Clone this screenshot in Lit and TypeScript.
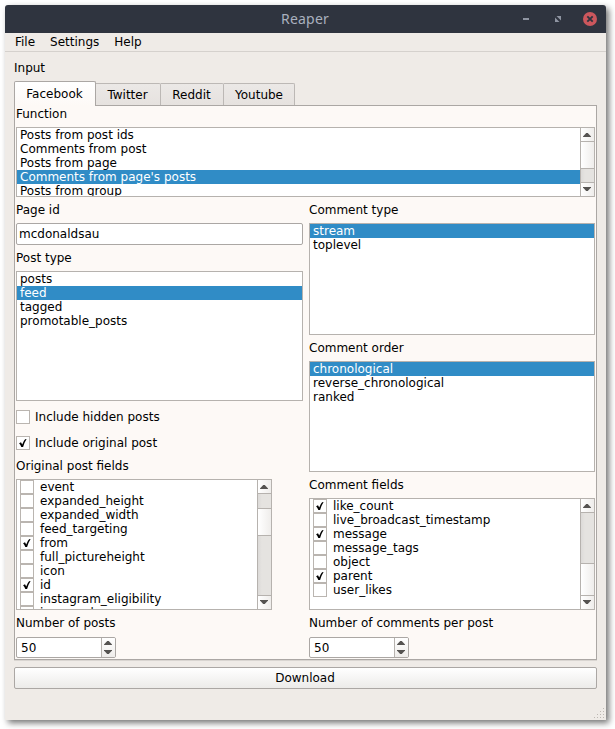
import { LitElement, html, css, svg, nothing } from "lit";
import { customElement, property } from "lit/decorators.js";
import { classMap } from "lit/directives/class-map.js";
import { styleMap } from "lit/directives/style-map.js";

interface Item {
  text: string;
  checked?: boolean;
}

const arrow = (down = false) => html`
  <svg class=${down ? "arrow down" : "arrow"} width="8" height="4" viewBox="0 0 8 4">
    <path d="M3.2 0H4.8L8 3.4V4H0V3.4Z" fill="#555351" />
  </svg>`;

const box = (checked = false) => html`
  <svg class="box" width="14" height="14" viewBox="0 0 14 14">
    <rect x=".5" y=".5" width="13" height="13" fill="#fff" stroke="#bab5b0" />
    ${checked
      ? svg`<path d="M3.1 7.2L5 6.2L6.2 8.4Q7.4 5 9.1 3.2L10.6 3Q8.3 6.6 7.1 11H5.3Q4.6 8.8 3.1 7.2Z" fill="#000" />`
      : nothing}
  </svg>`;

@customElement("list-box")
export class ListBox extends LitElement {
  @property({ attribute: false }) items: Item[] = [];
  @property() selected = "";
  @property({ type: Boolean }) checks = false;
  @property({ attribute: false }) thumb?: [number, number];

  static styles = css`
    :host { display: flex; box-sizing: border-box; border: 1px solid #b6b2ae; background: #fff; overflow: hidden; }
    .rows { flex: 1; min-width: 0; overflow: hidden; }
    .row { display: flex; height: 14px; line-height: 14px; padding-left: 3px; white-space: pre; }
    .row.on { background: #308cc6; color: #fff; }
    .box { flex: none; margin-right: 6px; }
    .bar { width: 14px; box-sizing: border-box; border-left: 1px solid #b6b2ae; display: flex; flex-direction: column; background: linear-gradient(90deg, #dcdad8, #e5e3e0 30%); }
    .btn { flex: none; box-sizing: border-box; height: 14px; padding: 5px 0 0 2px; background: linear-gradient(90deg, #fff, #efedeb); }
    .btn.top { border-bottom: 1px solid #b6b2ae; }
    .btn.bottom { border-top: 1px solid #b6b2ae; margin-top: auto; padding-top: 4px; }
    .thumb { flex: none; box-sizing: border-box; border-bottom: 1px solid #b6b2ae; background: linear-gradient(90deg, #fff, #efedeb); }
    .thumb.mid { border-top: 1px solid #b6b2ae; }
    .thumb.end { border-bottom: 0; }
    .arrow { display: block; }
    .down { transform: rotate(180deg); }
  `;

  render() {
    const t = this.thumb;
    return html`
      <div class="rows">
        ${this.items.map((i) => html`
          <div class=${classMap({ row: true, on: i.text === this.selected })}>
            ${this.checks ? box(i.checked) : nothing}<span>${i.text}</span>
          </div>`)}
      </div>
      ${t
        ? html`<div class="bar">
            <div class="btn top">${arrow()}</div>
            <div class=${classMap({ thumb: true, mid: t[0] > 0, end: t[0] > 40 })}
              style=${styleMap({ marginTop: t[0] + "px", height: t[1] + "px" })}></div>
            <div class="btn bottom">${arrow(true)}</div>
          </div>`
        : nothing}`;
  }
}

@customElement("spin-box")
export class SpinBox extends LitElement {
  @property({ type: Number }) value = 0;

  static styles = css`
    :host { display: flex; box-sizing: border-box; width: 100px; height: 21px; border: 1px solid #aba7a4; border-radius: 2px; background: #fff; overflow: hidden; }
    .value { flex: 1; padding-left: 4px; line-height: 20px; }
    .steps { width: 14px; box-sizing: border-box; border-left: 1px solid #b6b2ae; display: flex; flex-direction: column; gap: 5px; padding: 3px 0 0 2px; background: linear-gradient(#fff, #efedeb); }
    .arrow { display: block; flex: none; }
    .down { transform: rotate(180deg); }
  `;

  render() {
    return html`<div class="value">${this.value}</div>
      <div class="steps">${arrow()}${arrow(true)}</div>`;
  }
}

const list = (...names: string[]): Item[] =>
  names.map((n) => ({ text: n.replace("*", ""), checked: n.endsWith("*") }));

@customElement("app-root")
export class AppRoot extends LitElement {
  static styles = css`
    :host { display: block; box-sizing: border-box; height: 729px; padding: 5px 9px 9px 5px; background: #fff; overflow: hidden; font: 12px "DejaVu Sans", sans-serif; color: #000; }
    .window { height: 715px; box-sizing: border-box; background: #efebe7; border-radius: 3px 3px 0 0; box-shadow: 3px 3px 6px 0 rgba(0, 0, 0, .55); display: flex; flex-direction: column; position: relative; }
    .title { height: 28px; flex: none; display: grid; grid-template-columns: 1fr auto 1fr; align-items: center; background: #2f343f; border-radius: 3px 3px 0 0; color: #a9b0be; font: 14px/28px "Noto Sans", sans-serif; letter-spacing: .2px; }
    .name { grid-column: 2; padding-right: 1px; }
    .controls { display: flex; justify-content: flex-end; align-items: center; padding-right: 9px; }
    .controls svg { display: block; }
    .menu { height: 18px; flex: none; display: flex; gap: 15px; padding-left: 10px; border-bottom: 1px solid #d5d1cd; line-height: 18px; }
    .body { padding: 0 9px; }
    .heading { height: 29px; line-height: 33px; }
    .tabs { display: flex; align-items: flex-end; height: 24px; }
    .tab { box-sizing: border-box; height: 22px; border: 1px solid #bcb8b5; border-left: 0; border-bottom: 0; border-radius: 0 2px 0 0; background: linear-gradient(#ebe8e6, #e6e2df); text-align: center; line-height: 22px; padding-right: 1px; }
    .tab.active { height: 25px; width: 82px; border: 1px solid #aba7a4; border-bottom: 0; border-radius: 2px 2px 0 0; background: linear-gradient(#fff, #fdf9f6); margin-bottom: -1px; line-height: 24px; position: relative; z-index: 1; }
    .twitter { width: 65px; }
    .reddit { width: 63px; }
    .youtube { width: 71px; padding-right: 0; }
    .pane { box-sizing: border-box; height: 555px; border: 1px solid #aba7a4; background: #fdf9f6; padding: 0 1px; box-shadow: 0 1px 0 #d9d5d1; }
    .label { height: 26px; line-height: 26px; white-space: nowrap; }
    .label.first { height: 21px; line-height: 16px; }
    .label.fields { height: 29px; line-height: 32px; }
    .label.count { height: 27px; line-height: 26px; }
    .columns { display: grid; grid-template-columns: 287px 286px; gap: 6px; }
    .functions { height: 70px; }
    .types { height: 130px; }
    .post-fields { height: 131px; width: 256px; }
    .tall { height: 112px; }
    .order { height: 111px; }
    .entry { box-sizing: border-box; height: 22px; border: 1px solid #aba7a4; border-radius: 2px; background: #fff; padding-left: 2px; line-height: 20px; }
    .check { display: flex; height: 14px; line-height: 14px; margin-top: 12px; gap: 5px; }
    .check.hidden-posts { margin-top: 9px; }
    .box { flex: none; }
    .download { box-sizing: border-box; height: 22px; margin-top: 7px; border: 1px solid #aba7a4; border-radius: 2px; background: linear-gradient(#fff, #ecebe9); text-align: center; line-height: 20px; padding-right: 1px; }
    .grip { position: absolute; right: 2px; bottom: 2px; }
  `;

  render() {
    const dots = [0, 1, 2, 3].flatMap((r) =>
      Array.from({ length: r + 1 }, (_, c) => [9 - c * 3, r * 3]));
    return html`
      <div class="window">
        <div class="title">
          <span class="name">Reaper</span>
          <div class="controls">
            <svg width="74" height="14" viewBox="0 0 74 14">
              <rect y="6" width="6" height="2" fill="#8f95a2" />
              <path d="M33.5 4H38V8.5ZM32 5.5V10H36.5Z" fill="#8f95a2" />
              <circle cx="67" cy="7" r="7" fill="#cc575d" />
              <path d="M64.3 4.3L69.7 9.7M69.7 4.3L64.3 9.7" stroke="#2f343f" stroke-width="1.9" />
            </svg>
          </div>
        </div>
        <div class="menu"><span>File</span><span>Settings</span><span>Help</span></div>
        <div class="body">
          <div class="heading">Input</div>
          <div class="tabs">
            <div class="tab active">Facebook</div>
            <div class="tab twitter">Twitter</div>
            <div class="tab reddit">Reddit</div>
            <div class="tab youtube">Youtube</div>
          </div>
          <div class="pane">
            <div class="label first">Function</div>
            <list-box class="functions" selected="Comments from page's posts" .thumb=${[0, 27]}
              .items=${list("Posts from post ids", "Comments from post", "Posts from page", "Comments from page's posts", "Posts from group")}></list-box>
            <div class="columns">
              <div>
                <div class="label">Page id</div>
                <div class="entry">mcdonaldsau</div>
                <div class="label">Post type</div>
                <list-box class="types" selected="feed" .items=${list("posts", "feed", "tagged", "promotable_posts")}></list-box>
                <div class="check hidden-posts">${box()}<span>Include hidden posts</span></div>
                <div class="check">${box(true)}<span>Include original post</span></div>
                <div class="label fields">Original post fields</div>
                <list-box class="post-fields" checks .thumb=${[14, 28]}
                  .items=${list("event", "expanded_height", "expanded_width", "feed_targeting", "from*", "full_pictureheight", "icon", "id*", "instagram_eligibility", "is_app_share")}></list-box>
                <div class="label count">Number of posts</div>
                <spin-box value="50"></spin-box>
              </div>
              <div>
                <div class="label">Comment type</div>
                <list-box class="tall" selected="stream" .items=${list("stream", "toplevel")}></list-box>
                <div class="label">Comment order</div>
                <list-box class="order" selected="chronological" .items=${list("chronological", "reverse_chronological", "ranked")}></list-box>
                <div class="label">Comment fields</div>
                <list-box class="tall" checks .thumb=${[50, 32]}
                  .items=${list("like_count*", "live_broadcast_timestamp", "message*", "message_tags", "object", "parent*", "user_likes")}></list-box>
                <div class="label count">Number of comments per post</div>
                <spin-box value="50"></spin-box>
              </div>
            </div>
          </div>
          <div class="download">Download</div>
        </div>
        <svg class="grip" width="10" height="10" viewBox="0 0 10 10" fill="#bdb8b3">
          ${dots.map(([x, y]) => svg`<rect x=${x} y=${y} width="1" height="1" />`)}
        </svg>
      </div>`;
  }
}
